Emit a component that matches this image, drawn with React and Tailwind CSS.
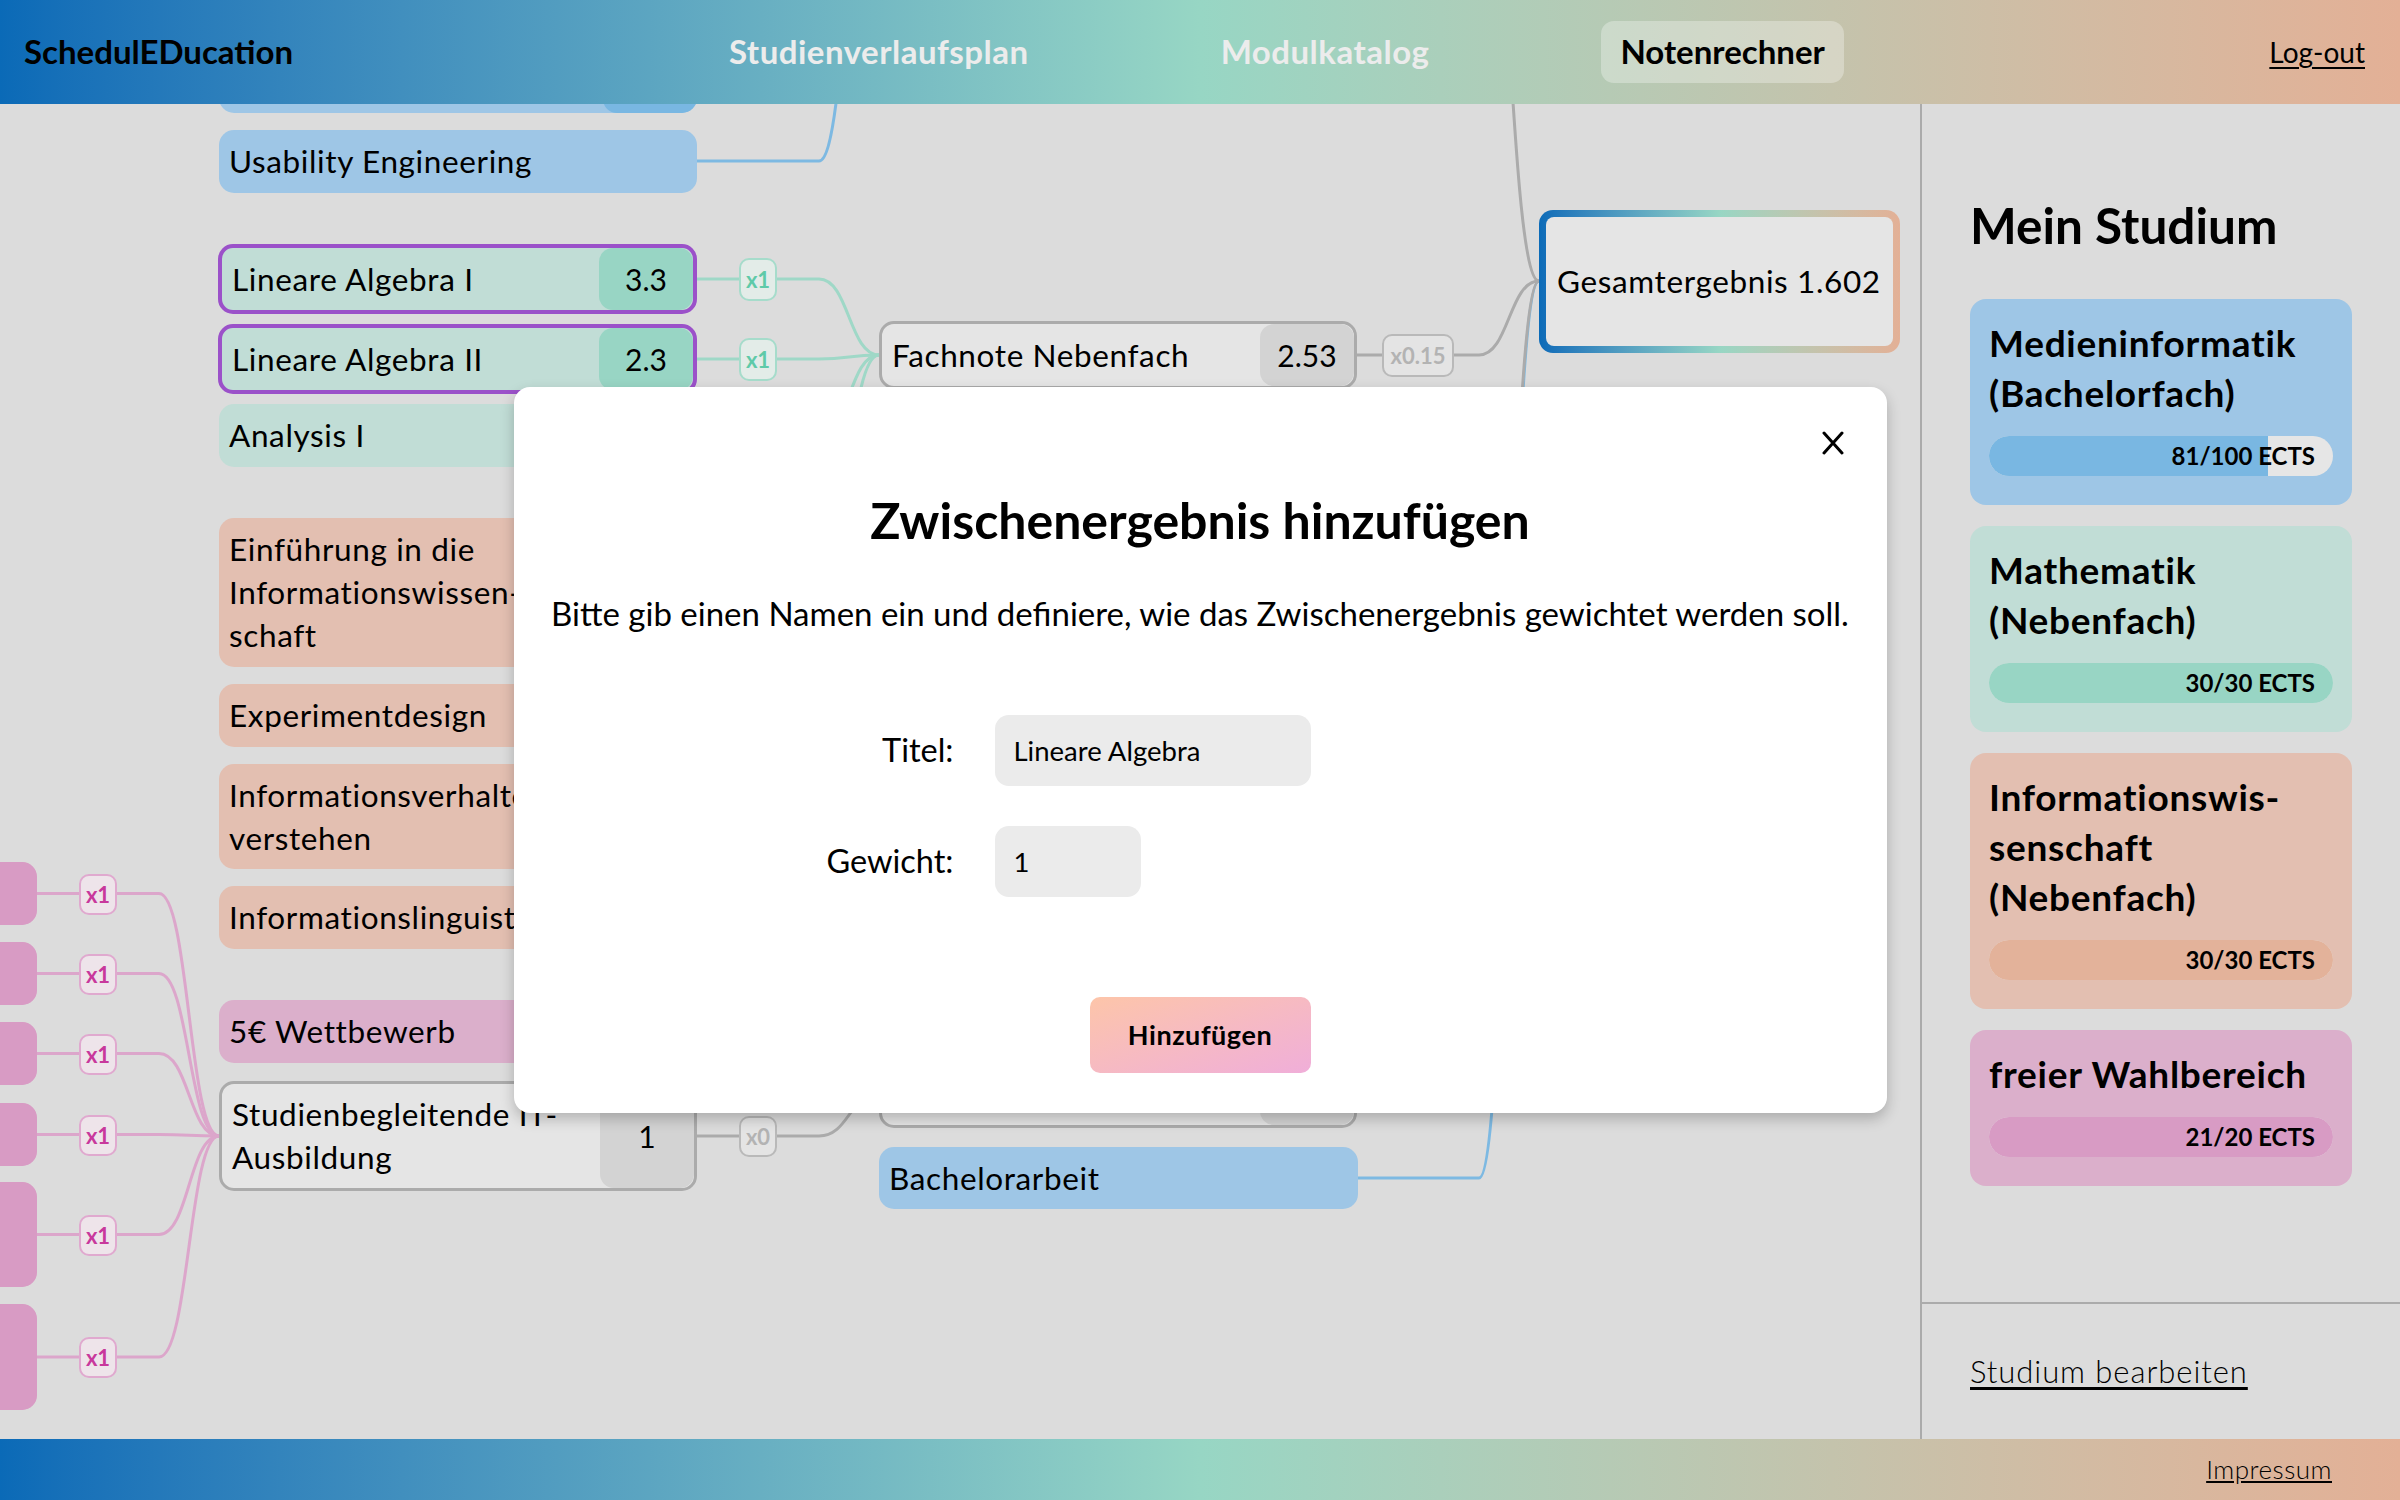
import React from 'react';
import clsx from 'clsx';

// canvas starts under the 104px header
const TOP = 104;

const tones = {
  blue: { bg: 'bg-[#9ec6e6]', grade: 'bg-[#79b7e2]' },
  mint: { bg: 'bg-[#c1ddd6]', grade: 'bg-[#98d5c4]' },
  peach: { bg: 'bg-[#e3bfb1]', grade: 'bg-[#e3b29a]' },
  pink: { bg: 'bg-[#dbafcb]', grade: 'bg-[#d79ac3]' },
  gray: { bg: 'bg-[#e5e5e5]', grade: 'bg-[#d3d3d3]' },
};

const nodes = [
  { id: 'top', x: 219, y: 50, w: 478, h: 63, tone: 'blue', label: '', grade: '' },
  { id: 'ue', x: 219, y: 130, w: 478, h: 63, tone: 'blue', label: 'Usability Engineering' },
  { id: 'la1', x: 218, y: 244, w: 479, h: 70, tone: 'mint', label: 'Lineare Algebra I', grade: '3.3', selected: true },
  { id: 'la2', x: 218, y: 324, w: 479, h: 70, tone: 'mint', label: 'Lineare Algebra II', grade: '2.3', selected: true },
  { id: 'ana', x: 219, y: 404, w: 478, h: 63, tone: 'mint', label: 'Analysis I' },
  { id: 'iw', x: 219, y: 518, w: 478, h: 149, tone: 'peach', label: ['Einführung in die', 'Informationswissen-', 'schaft'] },
  { id: 'exp', x: 219, y: 684, w: 478, h: 63, tone: 'peach', label: 'Experimentdesign' },
  { id: 'iv', x: 219, y: 764, w: 478, h: 105, tone: 'peach', label: ['Informationsverhalten', 'verstehen'] },
  { id: 'il', x: 219, y: 886, w: 478, h: 63, tone: 'peach', label: 'Informationslinguistik' },
  { id: 'wb', x: 219, y: 1000, w: 478, h: 63, tone: 'pink', label: '5€ Wettbewerb' },
  { id: 'it', x: 219, y: 1081, w: 478, h: 110, tone: 'gray', label: ['Studienbegleitende IT-', 'Ausbildung'], grade: '1', outlined: true },
  { id: 'fn', x: 879, y: 321, w: 478, h: 68, tone: 'gray', label: 'Fachnote Nebenfach', grade: '2.53', outlined: true },
  { id: 'fb', x: 879, y: 1060, w: 478, h: 68, tone: 'gray', label: '', grade: '', outlined: true },
  { id: 'ba', x: 879, y: 1147, w: 479, h: 62, tone: 'blue', label: 'Bachelorarbeit' },
];

// the pink modules are panned off the left edge, only their grade part shows
const pinkRows = [
  { y: 862, h: 63 },
  { y: 942, h: 63 },
  { y: 1022, h: 63 },
  { y: 1103, h: 63 },
  { y: 1182, h: 105 },
  { y: 1304, h: 106 },
];

const badges = [
  { x: 739, y: 258, w: 38, h: 43, tone: 'mint', text: 'x1' },
  { x: 739, y: 338, w: 38, h: 43, tone: 'mint', text: 'x1' },
  { x: 1382, y: 334, w: 72, h: 43, tone: 'gray', text: 'x0.15' },
  { x: 739, y: 1116, w: 38, h: 41, tone: 'gray', text: 'x0' },
  ...pinkRows.map(r => ({ x: 79, y: r.y + r.h / 2 - 20, w: 38, h: 41, tone: 'pink', text: 'x1' })),
];

const badgeTones = {
  mint: 'border-[#a6dccb] text-[#5fcaa8] bg-[#e3ece8]',
  gray: 'border-[#b9b9b9] text-[#b3b3b3] bg-[#e4e4e4]',
  pink: 'border-[#e0a9cf] text-[#c8389c] bg-[#eee4ea]',
};

const edge = (x0, y0, x1, y1) =>
  `M ${x0} ${y0} H ${x1 - 60} C ${x1 - 30} ${y0}, ${x1 - 30} ${y1}, ${x1} ${y1}`;

const lines = [
  // pink -> Studienbegleitende
  ...pinkRows.flatMap(r => {
    const c = r.y + r.h / 2;
    return [
      { d: `M 37 ${c} H 79`, c: '#dca6cb' },
      { d: edge(117, c, 219, 1136), c: '#dca6cb' },
    ];
  }),
  // mint -> Fachnote Nebenfach
  { d: 'M 697 279 H 739', c: '#9fd8c7' },
  { d: 'M 697 359 H 739', c: '#9fd8c7' },
  { d: edge(777, 279, 879, 355), c: '#9fd8c7' },
  { d: edge(777, 359, 879, 355), c: '#9fd8c7' },
  { d: edge(777, 436, 879, 355), c: '#9fd8c7' },
  { d: edge(777, 560, 879, 355), c: '#9fd8c7' },
  // blue
  { d: edge(697, 161, 879, -250), c: '#7db9e2' },
  { d: edge(1358, 1178, 1539, 281), c: '#7db9e2' },
  // gray
  { d: 'M 1357 355 H 1382', c: '#ababab' },
  { d: edge(1454, 355, 1539, 281), c: '#ababab' },
  { d: edge(1356, -200, 1539, 281), c: '#ababab' },
  { d: edge(1454, 1094, 1539, 281), c: '#ababab' },
  { d: 'M 697 1136 H 739', c: '#ababab' },
  { d: edge(777, 1136, 879, 1094), c: '#ababab' },
];

const Node = ({ node }) => {
  const t = tones[node.tone];
  const label = Array.isArray(node.label)
    ? node.label.map((l, i) => <span key={i} className="block whitespace-nowrap">{l}</span>)
    : node.label;
  return (
    <div
      className={clsx(
        'absolute flex overflow-hidden rounded-[15px]',
        t.bg,
        node.selected && 'border-[4px] border-[#9b51c9]',
        node.outlined && 'border-[3px] border-[#ababab]'
      )}
      style={{ left: node.x, top: node.y - TOP, width: node.w, height: node.h }}
    >
      <div className="flex-1 min-w-0 flex items-center pl-[10px] text-[31.5px] tracking-[0.02em] leading-[43px] text-black whitespace-nowrap">
        <div>{label}</div>
      </div>
      {node.grade !== undefined && (
        <div className={clsx('w-[94px] shrink-0 flex items-center justify-center rounded-[14px] text-[30px]', t.grade)}>
          {node.grade}
        </div>
      )}
    </div>
  );
};

const Canvas = () => (
  <div className="relative w-[1920px] h-full overflow-hidden">
    <svg className="absolute inset-0 w-full h-full" fill="none">
      <g transform={`translate(0,-${TOP})`}>
        {lines.map((l, i) => (
          <path key={i} d={l.d} stroke={l.c} strokeWidth="3" />
        ))}
      </g>
    </svg>

    {pinkRows.map((r, i) => (
      <div
        key={i}
        className="absolute flex justify-end overflow-hidden rounded-[15px] bg-[#dbafcb]"
        style={{ left: -441, top: r.y - TOP, width: 478, height: r.h }}
      >
        <div className="w-[94px] rounded-[14px] bg-[#d89bc4]" />
      </div>
    ))}

    {nodes.map(n => <Node key={n.id} node={n} />)}

    {badges.map((b, i) => (
      <div
        key={i}
        className={clsx(
          'absolute flex items-center justify-center rounded-[10px] border-2 text-[22px] font-bold',
          badgeTones[b.tone]
        )}
        style={{ left: b.x, top: b.y - TOP, width: b.w, height: b.h }}
      >
        {b.text}
      </div>
    ))}

    {/* Gesamtergebnis with gradient frame */}
    <div className="absolute left-[1539px] top-[106px] w-[361px] h-[143px] rounded-[14px] p-[7px] bg-linear-to-r from-[#0b6bb8] via-[#97d6c4] to-[#e3b096]">
      <div className="w-full h-full rounded-[8px] bg-[#e5e5e5] flex items-center pl-[11px] text-[31.5px] tracking-[0.02em] whitespace-nowrap">
        Gesamtergebnis 1.602
      </div>
    </div>
  </div>
);

const cards = [
  { title: ['Medieninformatik', '(Bachelorfach)'], ects: '81/100 ECTS', fill: 81, bg: 'bg-[#9ec6e6]', bar: 'bg-[#79b7e2]' },
  { title: ['Mathematik', '(Nebenfach)'], ects: '30/30 ECTS', fill: 100, bg: 'bg-[#c1ddd6]', bar: 'bg-[#98d5c4]' },
  { title: ['Informationswis-', 'senschaft', '(Nebenfach)'], ects: '30/30 ECTS', fill: 100, bg: 'bg-[#e3bfb1]', bar: 'bg-[#e3b29a]' },
  { title: ['freier Wahlbereich'], ects: '21/20 ECTS', fill: 100, bg: 'bg-[#dbafcb]', bar: 'bg-[#d89bc4]' },
];

const Sidebar = () => (
  <aside className="flex-1 flex flex-col border-l-2 border-[#ababab]">
    <div className="flex-1 pt-[89px] px-[48px]">
      <h2 className="text-[49.5px] font-bold leading-[65px] mb-[41px]">Mein Studium</h2>
      <div className="flex flex-col gap-[21px]">
        {cards.map(c => (
          <div key={c.ects + c.title[0]} className={clsx('rounded-[16px] px-[19px] pt-[19px] pb-[29px]', c.bg)}>
            <h3 className="text-[37px] tracking-[0.02em] font-bold leading-[50px] whitespace-nowrap">
              {c.title.map(t => <span key={t} className="block">{t}</span>)}
            </h3>
            <div className="relative mt-[18px] h-[40px] rounded-full overflow-hidden bg-[#e6e6e6]">
              <div className={clsx('absolute inset-y-0 left-0', c.bar)} style={{ width: `${c.fill}%` }} />
              <div className="relative h-full flex items-center justify-end pr-[18px] text-[24px] font-bold">
                {c.ects}
              </div>
            </div>
          </div>
        ))}
      </div>
    </div>
    <div className="h-[137px] border-t-2 border-[#ababab] flex items-center px-[48px]">
      <a className="text-[31px] tracking-[0.03em] font-light underline underline-offset-4">Studium bearbeiten</a>
    </div>
  </aside>
);

const Header = () => (
  <header className="h-[104px] shrink-0 flex items-center pl-[24px] pr-[35px] bg-linear-to-r from-[#0a6ab7] via-[#97d6c4] to-[#e3b096]">
    <div className="w-[685px] text-[33px] font-bold">SchedulEDucation</div>
    <nav className="flex items-center gap-[152px] text-[33px] tracking-[0.015em] font-bold">
      <a className="px-[20px] text-[#ececec]">Studienverlaufsplan</a>
      <a className="px-[20px] text-[#ececec]">Modulkatalog</a>
      <a className="h-[62px] flex items-center px-[19px] rounded-[13px] bg-white/30 text-black tracking-normal">Notenrechner</a>
    </nav>
    <a className="ml-auto text-[28px] underline underline-offset-4">Log-out</a>
  </header>
);

const Footer = () => (
  <footer className="h-[61px] shrink-0 flex items-center justify-end pr-[68px] bg-linear-to-r from-[#0a6ab7] via-[#97d6c4] to-[#e3b096]">
    <a className="text-[26px] tracking-[0.02em] font-light underline">Impressum</a>
  </footer>
);

const Modal = () => (
  <div className="absolute inset-0 flex items-center justify-center">
    <div className="relative w-[1373px] h-[726px] bg-white rounded-[16px] shadow-[0_6px_14px_rgba(0,0,0,0.22)] pt-[103px] flex flex-col">
      <button className="absolute right-[42px] top-[44px] w-[24px] h-[24px]">
        <svg viewBox="0 0 24 24" className="w-full h-full" stroke="black" strokeWidth="3" strokeLinecap="round">
          <path d="M3 2 L21 22 M21 2 L3 22" />
        </svg>
      </button>
      <h2 className="text-center text-[50px] font-bold leading-[60px]">Zwischenergebnis hinzufügen</h2>
      <p className="mt-[42px] text-center text-[33px] leading-[42px]">
        Bitte gib einen Namen ein und definiere, wie das Zwischenergebnis gewichtet werden soll.
      </p>
      <div className="mt-[81px] flex flex-col gap-[40px]">
        <label className="flex items-center">
          <span className="w-[440px] text-right text-[32.5px]">Titel:</span>
          <input
            defaultValue="Lineare Algebra"
            className="ml-[41px] w-[316px] h-[71px] rounded-[14px] bg-[#ebebeb] px-[19px] text-[27.5px] outline-none"
          />
        </label>
        <label className="flex items-center">
          <span className="w-[440px] text-right text-[32.5px]">Gewicht:</span>
          <input
            defaultValue="1"
            className="ml-[41px] w-[146px] h-[71px] rounded-[14px] bg-[#ebebeb] px-[19px] text-[27.5px] outline-none"
          />
        </label>
      </div>
      <button className="mt-[100px] mx-auto w-[221px] h-[76px] rounded-[10px] bg-linear-to-br from-[#fdc5a9] to-[#f0aed9] text-[27px] tracking-[0.02em] font-bold">
        Hinzufügen
      </button>
    </div>
  </div>
);

export default function App() {
  return (
    <div className="relative w-[2400px] h-[1500px] overflow-hidden flex flex-col bg-[#dcdcdc] text-black font-['Lato','Noto_Sans',sans-serif]">
      <Header />
      <main className="flex-1 min-h-0 flex">
        <Canvas />
        <Sidebar />
      </main>
      <Footer />
      <Modal />
    </div>
  );
}
